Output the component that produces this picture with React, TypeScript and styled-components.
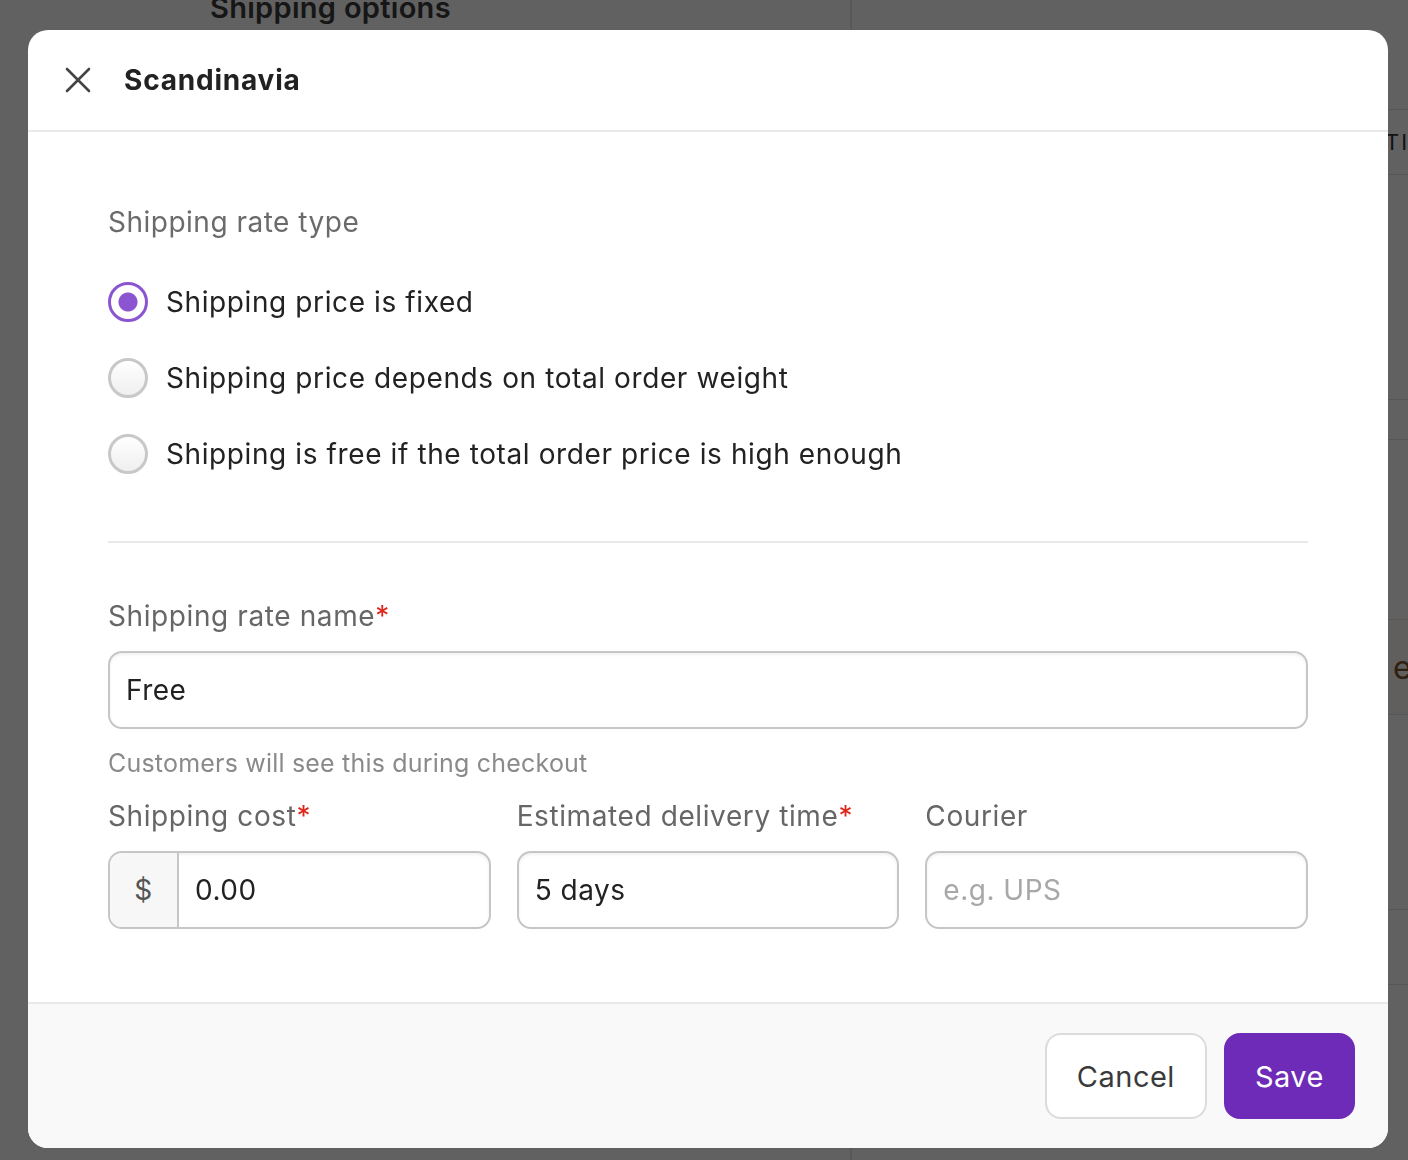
import { useState } from 'react';
import styled, { createGlobalStyle } from 'styled-components';

const GlobalStyle = createGlobalStyle`
  html, body {
    margin: 0;
    padding: 0;
    background: #ffffff;
    font-family: Inter, 'Noto Sans', 'Liberation Sans', sans-serif;
    letter-spacing: 0.5px;
    -webkit-font-smoothing: antialiased;
  }
  * { box-sizing: border-box; }
`;

const rateTypes = [
  'Shipping price is fixed',
  'Shipping price depends on total order weight',
  'Shipping is free if the total order price is high enough',
];

const App = () => {
  const [rateType, setRateType] = useState(0);
  const [name, setName] = useState('Free');
  const [cost, setCost] = useState('0.00');
  const [delivery, setDelivery] = useState('5 days');
  const [courier, setCourier] = useState('');

  return (
    <>
      <GlobalStyle />
      <Backdrop>
        <BackdropMain>
          <BackdropTitle>Shipping options</BackdropTitle>
        </BackdropMain>
        <BackdropSide>
          <SideRow height={110} />
          <SideRow height={65}>
            <SideHead>TITLE</SideHead>
          </SideRow>
          <SideRow height={225} />
          <SideRow height={40} />
          <SideRow height={180} />
          <SideRow height={95} tinted>
            <SideLink>edit</SideLink>
          </SideRow>
          <SideRow height={195} />
          <SideRow height={75} />
        </BackdropSide>
      </Backdrop>

      <Overlay>
        <Dialog>
          <Header>
            <CloseButton aria-label="Close">
              <svg width="28" height="28" viewBox="0 0 28 28" fill="none">
                <path d="M3 3L25 25M25 3L3 25" stroke="#444" strokeWidth="2.6" strokeLinecap="round" />
              </svg>
            </CloseButton>
            <Title>Scandinavia</Title>
          </Header>

          <Body>
            <SectionLabel>Shipping rate type</SectionLabel>
            <RadioList>
              {rateTypes.map((label, i) => (
                <RadioRow key={label} onClick={() => setRateType(i)}>
                  <RadioCircle checked={rateType === i} />
                  <RadioText>{label}</RadioText>
                </RadioRow>
              ))}
            </RadioList>

            <Divider />

            <Field>
              <FieldLabel>
                Shipping rate name<Required>*</Required>
              </FieldLabel>
              <TextInput value={name} onChange={(e) => setName(e.target.value)} />
              <Help>Customers will see this during checkout</Help>
            </Field>

            <FieldGrid>
              <Field>
                <FieldLabel>
                  Shipping cost<Required>*</Required>
                </FieldLabel>
                <InputGroup>
                  <Prefix>$</Prefix>
                  <GroupInput value={cost} onChange={(e) => setCost(e.target.value)} />
                </InputGroup>
              </Field>
              <Field>
                <FieldLabel>
                  Estimated delivery time<Required>*</Required>
                </FieldLabel>
                <TextInput value={delivery} onChange={(e) => setDelivery(e.target.value)} />
              </Field>
              <Field>
                <FieldLabel>Courier</FieldLabel>
                <TextInput
                  placeholder="e.g. UPS"
                  value={courier}
                  onChange={(e) => setCourier(e.target.value)}
                />
              </Field>
            </FieldGrid>
          </Body>

          <Footer>
            <SecondaryButton>Cancel</SecondaryButton>
            <PrimaryButton>Save</PrimaryButton>
          </Footer>
        </Dialog>
      </Overlay>
    </>
  );
};

const Backdrop = styled.div`
  display: flex;
  min-height: 1160px;
  background: #ffffff;
  overflow: hidden;
`;

const BackdropMain = styled.div`
  width: 850px;
  flex-shrink: 0;
  padding-left: 210px;
`;

const BackdropTitle = styled.h1`
  margin: -12px 0 0;
  font-size: 29px;
  font-weight: 600;
  letter-spacing: 0.3px;
  color: #3a3a3a;
  line-height: 40px;
`;

const BackdropSide = styled.div`
  flex: 1;
  min-width: 0;
  border-left: 2px solid #e6e6e6;
  display: flex;
  flex-direction: column;
`;

const SideRow = styled.div<{ height: number; tinted?: boolean }>`
  height: ${({ height }) => height}px;
  border-bottom: 1px solid #e2e2e2;
  background: ${({ tinted }) => (tinted ? '#fcfaf8' : 'transparent')};
  display: flex;
  align-items: center;
  padding-left: 533px;
  white-space: nowrap;
`;

const SideHead = styled.span`
  font-size: 22px;
  letter-spacing: 2px;
  color: #333;
`;

const SideLink = styled.span`
  font-size: 32px;
  color: #7a5631;
  margin-left: 8px;
`;

const Overlay = styled.div`
  position: fixed;
  inset: 0;
  background: rgba(0, 0, 0, 0.62);
  padding: 30px 0 0 28px;
`;

const Dialog = styled.div`
  width: 1360px;
  height: 1118px;
  background: #ffffff;
  border-radius: 20px;
  overflow: hidden;
  display: flex;
  flex-direction: column;
`;

const Header = styled.div`
  height: 102px;
  flex-shrink: 0;
  display: flex;
  align-items: center;
  gap: 32px;
  padding: 0 0 0 36px;
  border-bottom: 2px solid #e9e9e9;
`;

const CloseButton = styled.button`
  width: 28px;
  height: 28px;
  padding: 0;
  border: 0;
  background: none;
  display: flex;
  cursor: pointer;
`;

const Title = styled.h2`
  margin: 0;
  font-size: 28px;
  font-weight: 700;
  letter-spacing: 0.8px;
  color: #222;
`;

const Body = styled.div`
  flex: 1;
  padding: 72px 80px 0;
  display: flex;
  flex-direction: column;
`;

const SectionLabel = styled.div`
  font-size: 28px;
  line-height: 36px;
  color: #6b6b6b;
`;

const RadioList = styled.div`
  margin-top: 42px;
  display: flex;
  flex-direction: column;
  gap: 36px;
`;

const RadioRow = styled.label`
  display: flex;
  align-items: center;
  gap: 18px;
  height: 40px;
  cursor: pointer;
`;

const RadioCircle = styled.span<{ checked: boolean }>`
  width: 40px;
  height: 40px;
  border-radius: 50%;
  flex-shrink: 0;
  border: 3px solid ${({ checked }) => (checked ? '#8b55d1' : '#c8c8c8')};
  background: ${({ checked }) =>
    checked
      ? 'radial-gradient(circle, #8b55d1 0 9px, #ffffff 10px)'
      : 'linear-gradient(#ffffff, #efefef)'};
`;

const RadioText = styled.span`
  font-size: 28px;
  letter-spacing: 0.6px;
  color: #222;
`;

const Divider = styled.hr`
  margin: 67px 0 0;
  border: 0;
  border-top: 2px solid #e8e8e8;
`;

const Field = styled.div`
  display: flex;
  flex-direction: column;
  min-width: 0;
  margin-top: 55px;
`;

const FieldLabel = styled.div`
  font-size: 28px;
  line-height: 36px;
  letter-spacing: 0.6px;
  color: #666;
  white-space: nowrap;
  margin-bottom: 17px;
`;

const Required = styled.span`
  color: #e0261b;
`;

const TextInput = styled.input`
  height: 78px;
  width: 100%;
  border: 2px solid #c6c6c6;
  border-radius: 14px;
  padding: 0 16px;
  font: inherit;
  font-size: 28px;
  letter-spacing: 0.5px;
  color: #222;
  background: #fff;
  box-shadow: inset 0 2px 3px rgba(0, 0, 0, 0.06);
  outline: none;
  &::placeholder {
    color: #a8a8a8;
  }
`;

const Help = styled.div`
  margin-top: 18px;
  font-size: 25px;
  line-height: 32px;
  letter-spacing: 0.2px;
  color: #8a8a8a;
`;

const FieldGrid = styled.div`
  display: grid;
  grid-template-columns: repeat(3, minmax(0, 1fr));
  gap: 26px;
  margin-top: -36px;
`;

const InputGroup = styled.div`
  display: flex;
  height: 78px;
  border: 2px solid #c6c6c6;
  border-radius: 14px;
  overflow: hidden;
  box-shadow: inset 0 2px 3px rgba(0, 0, 0, 0.06);
`;

const Prefix = styled.span`
  width: 69px;
  flex-shrink: 0;
  display: flex;
  align-items: center;
  justify-content: center;
  background: #f7f7f7;
  border-right: 2px solid #c6c6c6;
  font-size: 28px;
  color: #555;
`;

const GroupInput = styled.input`
  flex: 1;
  min-width: 0;
  border: 0;
  padding: 0 16px;
  font: inherit;
  font-size: 28px;
  letter-spacing: 0.5px;
  color: #222;
  background: transparent;
  outline: none;
`;

const Footer = styled.div`
  height: 146px;
  flex-shrink: 0;
  border-top: 2px solid #e9e9e9;
  background: #f9f9f9;
  display: flex;
  align-items: center;
  justify-content: flex-end;
  gap: 17px;
  padding: 0 33px 0 0;
`;

const BaseButton = styled.button`
  height: 86px;
  border-radius: 16px;
  font: inherit;
  font-size: 29px;
  letter-spacing: 0.5px;
  cursor: pointer;
`;

const SecondaryButton = styled(BaseButton)`
  padding: 0 30px;
  background: #ffffff;
  border: 2px solid #dcdcdc;
  color: #3a3a3a;
`;

const PrimaryButton = styled(BaseButton)`
  padding: 0 29px;
  background: #6d2bb8;
  border: 2px solid #6d2bb8;
  color: #ffffff;
`;

export default App;
